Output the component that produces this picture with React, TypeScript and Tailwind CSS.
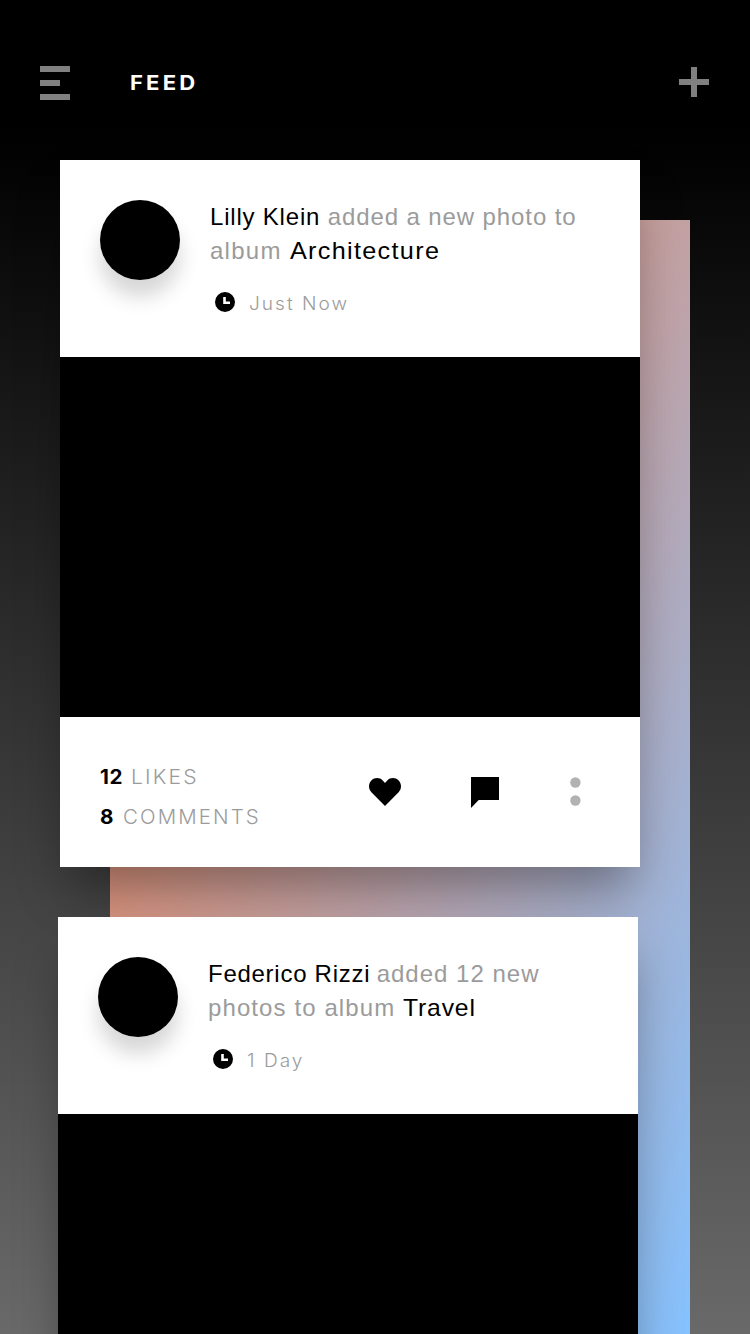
import type { ReactNode } from "react";

function ClockIcon() {
  return (
    <svg width="20" height="20" viewBox="0 0 20 20" aria-hidden="true">
      <circle cx="10" cy="10" r="10" fill="#000" />
      <path d="M9.500 5v5.700h5.500" fill="none" stroke="#fff" strokeWidth="2.600" />
    </svg>
  );
}

function HeartIcon() {
  return (
    <svg width="32" height="28" viewBox="0 0 32 28" aria-hidden="true">
      <path d="M16 28 2.400 14.200C-.8 10.800-.8 5.600 2.400 2.400C5.600-.8 10.600-.8 13.700 2.400L16 4.900L18.300 2.400C21.400-.8 26.400-.8 29.600 2.400C32.800 5.600 32.800 10.800 29.600 14.200Z" />
    </svg>
  );
}

function CommentIcon() {
  return (
    <svg width="28" height="31" viewBox="0 0 28 31" aria-hidden="true">
      <path d="M0 0H28V23H7.700L0 31Z" />
    </svg>
  );
}

function MoreIcon() {
  return (
    <svg width="11" height="29" viewBox="0 0 11 29" fill="#b2b2b2" aria-hidden="true">
      <circle cx="5.400" cy="5.500" r="5.200" />
      <circle cx="5.400" cy="23.500" r="5.200" />
    </svg>
  );
}

type CardProps = { time: string; children: ReactNode; footer?: ReactNode };

function FeedCard({ time, children, footer }: CardProps) {
  return (
    <article className="w-[580px] bg-white shadow-[0_30px_46px_-8px_rgba(0,0,0,0.36)]">
      <div className="flex h-[197px] px-10 pt-10">
        <div className="size-20 shrink-0 rounded-full bg-black shadow-[0_17px_20px_rgba(0,0,0,0.16)]" />
        <div className="ml-[30px]">
          <div className="whitespace-nowrap text-2xl leading-[34px] text-[#9b9b9b]">{children}</div>
          <div className="mt-[24px] flex h-5 items-center pl-[5px]">
            <ClockIcon />
            <span className="ml-[14px] mt-0.5 inline-block origin-left scale-x-[1.06] font-['Inter',sans-serif] text-[18px] font-light tracking-[1.900px] text-[#9b9b9b]">
              {time}
            </span>
          </div>
        </div>
      </div>
      <div className="h-[360px] bg-black" />
      {footer}
    </article>
  );
}

export default function App() {
  return (
    <div className="relative isolate h-[1334px] w-[750px] overflow-hidden bg-[linear-gradient(180deg,#000_130px,#696969_1334px)] font-['Liberation_Sans',sans-serif]">
      <div className="absolute left-[110px] top-[220px] -z-10 h-[1114px] w-[580px] bg-linear-to-br/srgb from-[#ff8148] to-[#86c2ff]" />

      <header className="flex h-40 px-10">
        <button className="mt-[66px] flex h-[34px] w-[30px] flex-col justify-between" aria-label="Menu">
          <span className="h-1.5 w-[30px] bg-[#808080]" />
          <span className="h-1.5 w-5 bg-[#808080]" />
          <span className="h-1.5 w-[30px] bg-[#808080]" />
        </button>
        <h1 className="ml-[60px] mt-[68px] origin-left scale-x-[1.13] font-['Inter',sans-serif] text-[19.500px] font-bold leading-[30px] tracking-[2.800px] text-white">
          FEED
        </h1>
        <button className="ml-auto mr-px mt-[67px] size-[30px]" aria-label="Add">
          <svg width="30" height="30" viewBox="0 0 30 30">
            <path d="M12 0h6v12h12v6H18v12h-6V18H0v-6h12Z" fill="#808080" />
          </svg>
        </button>
      </header>

      <main className="flex flex-col gap-[50px] pl-[60px]">
        <FeedCard
          time="Just Now"
          footer={
            <div className="flex h-[150px] px-10 font-['Inter',sans-serif] text-[19.500px] font-light text-[#9b9b9b]">
              <div className="w-[269px] pt-10 leading-10">
                <p>
                  <b className="mr-[9px] inline-block origin-left scale-x-[1.06] font-bold tracking-[0.500px] text-black">12</b>
                  <span className="inline-block origin-left scale-x-[1.08] tracking-[2px]">LIKES</span>
                </p>
                <p>
                  <b className="mr-[9px] inline-block origin-left scale-x-[1.06] font-bold tracking-[1px] text-black">8</b>
                  <span className="inline-block origin-left scale-x-[1.05] tracking-[2px]">COMMENTS</span>
                </p>
              </div>
              <div className="mt-[61px]"><HeartIcon /></div>
              <div className="ml-[70px] mt-[60px]"><CommentIcon /></div>
              <div className="ml-[71px] mt-[60px]"><MoreIcon /></div>
            </div>
          }
        >
          <p>
            <span className="tracking-[0.800px] text-black">Lilly Klein </span>
            <span className="tracking-[0.900px]">added a new photo to</span>
          </p>
          <p>
            <span className="tracking-[1.250px]">album </span>
            <span className="inline-block origin-left scale-x-[1.05] tracking-[1.250px] text-black">Architecture</span>
          </p>
        </FeedCard>
        <div className="-ml-0.5">
          <FeedCard time="1 Day">
            <p>
              <span className="tracking-[0.730px] text-black">Federico Rizzi </span>
              <span className="-ml-px tracking-[1px]">added 12 new</span>
            </p>
            <p>
              <span className="tracking-[1.100px]">photos to album </span>
              <span className="inline-block origin-left scale-x-[1.03] tracking-[0.800px] text-black">Travel</span>
            </p>
          </FeedCard>
        </div>
      </main>
    </div>
  );
}
